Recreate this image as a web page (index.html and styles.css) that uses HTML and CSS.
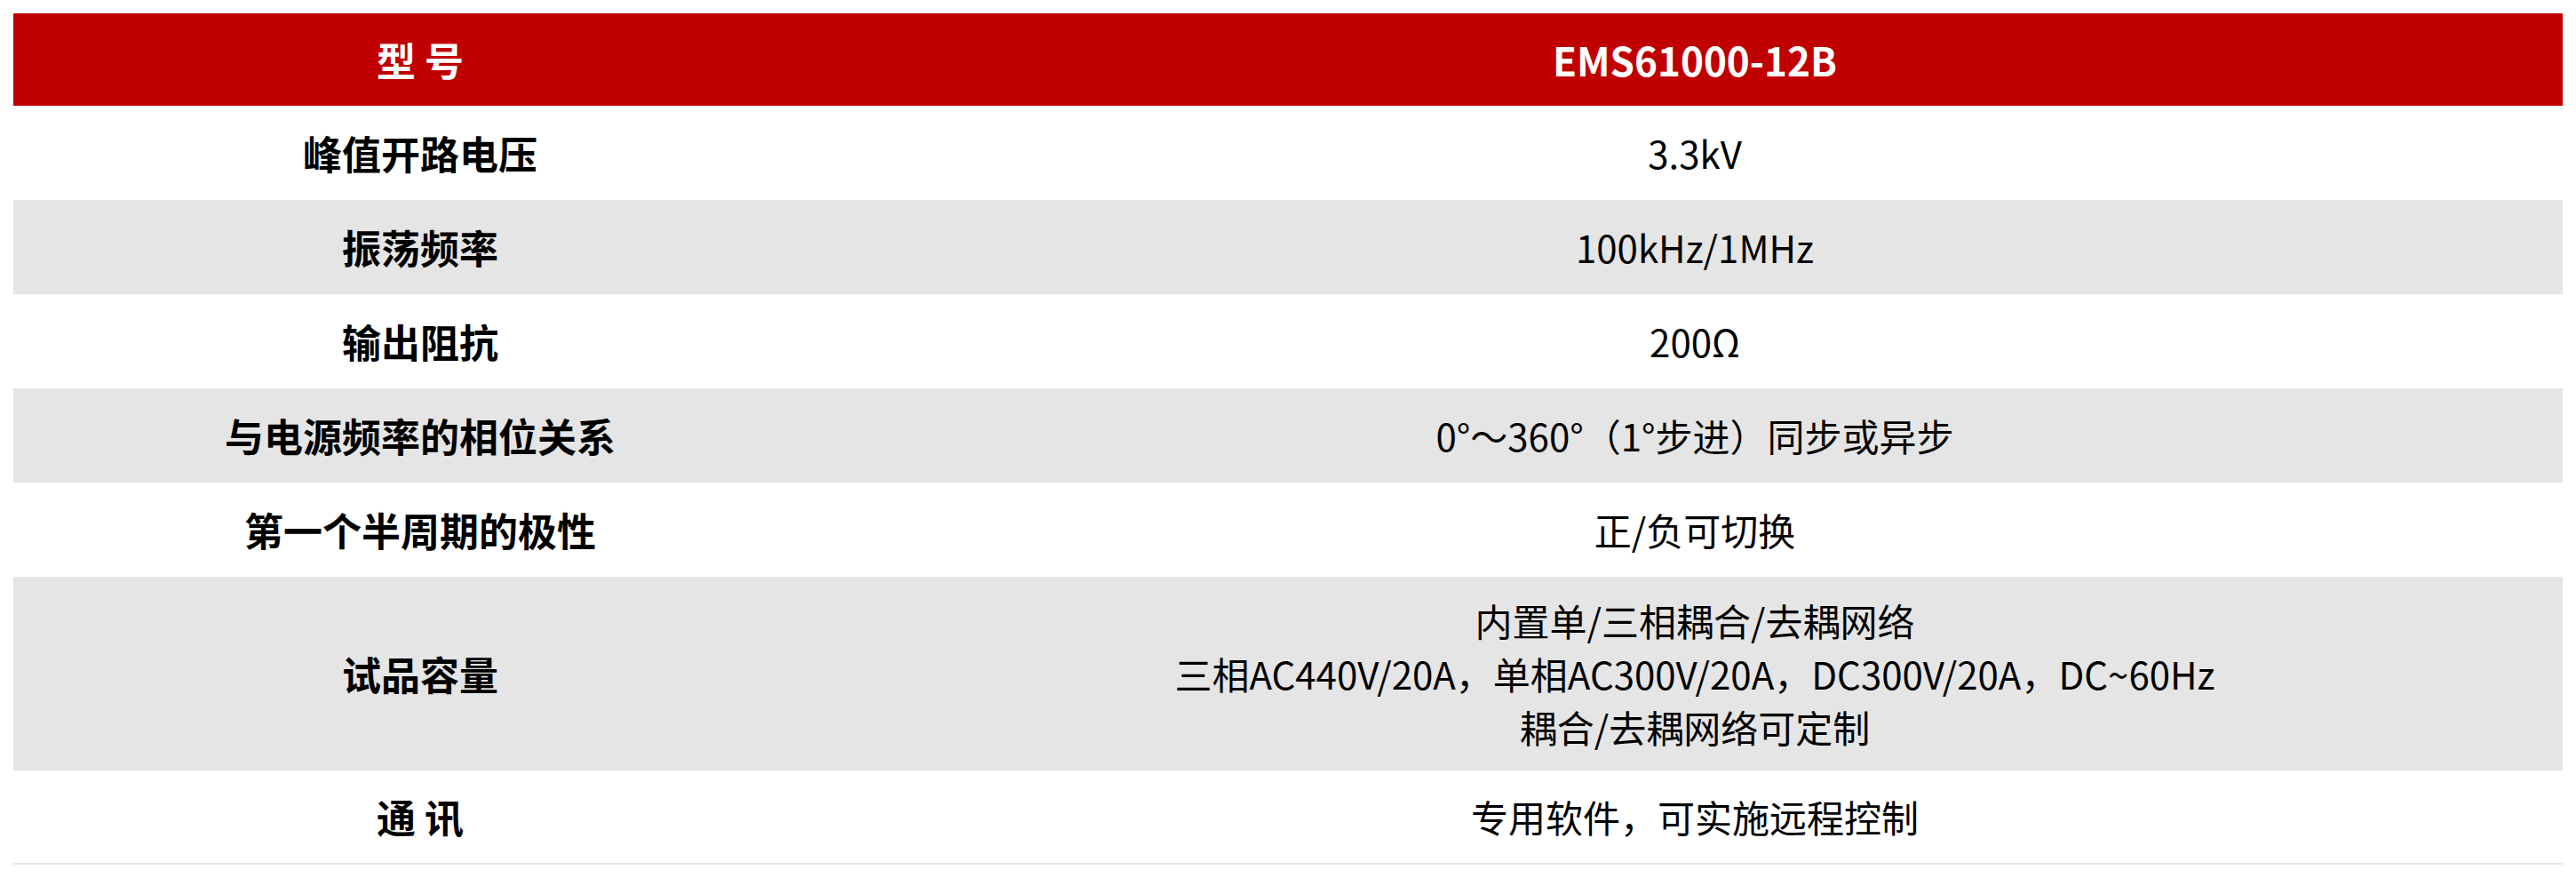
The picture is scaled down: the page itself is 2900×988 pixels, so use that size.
FILE: index.html
```html
<!DOCTYPE html>
<html lang="zh-CN">
<head>
<meta charset="utf-8">
<title>EMS61000-12B</title>
<link rel="stylesheet" href="styles.css">
</head>
<body>
<div class="wrap">
<table class="spec">
  <colgroup><col class="c-label"><col class="c-value"></colgroup>
  <thead>
    <tr class="head"><th>型 号</th><th>EMS61000-12B</th></tr>
  </thead>
  <tbody>
    <tr class="w"><td class="lbl">峰值开路电压</td><td class="val">3.3kV</td></tr>
    <tr class="g"><td class="lbl">振荡频率</td><td class="val">100kHz/1MHz</td></tr>
    <tr class="w"><td class="lbl">输出阻抗</td><td class="val">200Ω</td></tr>
    <tr class="g"><td class="lbl">与电源频率的相位关系</td><td class="val">0°～360°（1°步进）同步或异步</td></tr>
    <tr class="w"><td class="lbl">第一个半周期的极性</td><td class="val">正/负可切换</td></tr>
    <tr class="g tall"><td class="lbl">试品容量</td><td class="val">内置单/三相耦合/去耦网络<br>三相AC440V/20A，单相AC300V/20A，DC300V/20A，DC~60Hz<br>耦合/去耦网络可定制</td></tr>
    <tr class="w last"><td class="lbl">通 讯</td><td class="val">专用软件，可实施远程控制</td></tr>
  </tbody>
</table>
</div>
</body>
</html>
```
FILE: styles.css
```css
html, body {
  margin: 0;
  padding: 0;
  background: #ffffff;
}
.wrap {
  padding: 15px;
}
.spec {
  width: 2870px;
  border-collapse: collapse;
  table-layout: fixed;
  font-family: "Noto Sans CJK SC", "Noto Sans", sans-serif;
  font-size: 44px;
  line-height: 60px;
  color: #000000;
}
.c-label { width: 916px; }
.c-value { width: 1954px; }
.spec th, .spec td {
  padding: 0;
  text-align: center;
  vertical-align: middle;
}
.spec .head th {
  background: #c00000;
  color: #ffffff;
  font-weight: 700;
  height: 104px;
}
.spec tbody td { height: 106px; }
.spec td.lbl { font-weight: 700; }
.spec td.val { font-weight: 400; font-size: 42px; }
.spec .g td { background: #e5e5e5; }
.spec .w td { background: #ffffff; }
.spec .tall td { height: 218px; }
.spec .last td { height: 104px; border-bottom: 2px solid #e5e5e5; }
```
